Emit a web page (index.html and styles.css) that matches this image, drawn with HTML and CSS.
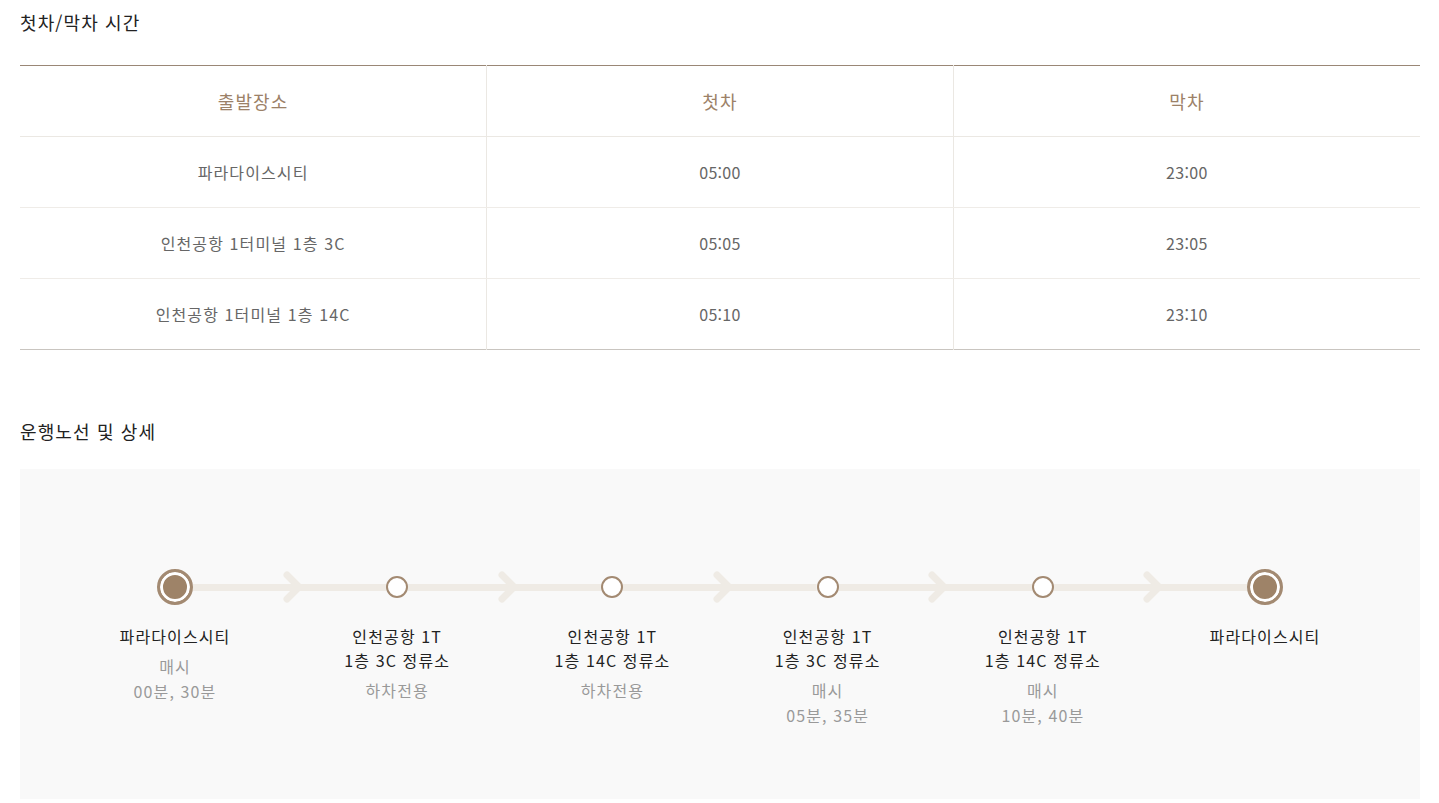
FILE: index.html
```html
<!DOCTYPE html>
<html lang="ko">
<head>
<meta charset="utf-8">
<title>첫차/막차 시간</title>
<link rel="stylesheet" href="styles.css">
</head>
<body>
<div class="wrap">
  <h2 class="title first">첫차/막차 시간</h2>
  <table class="times">
    <thead>
      <tr><th>출발장소</th><th>첫차</th><th>막차</th></tr>
    </thead>
    <tbody>
      <tr><td>파라다이스시티</td><td class="num">05:00</td><td class="num">23:00</td></tr>
      <tr><td>인천공항 1터미널 1층 3C</td><td class="num">05:05</td><td class="num">23:05</td></tr>
      <tr><td>인천공항 1터미널 1층 14C</td><td class="num">05:10</td><td class="num">23:10</td></tr>
    </tbody>
  </table>

  <h2 class="title second">운행노선 및 상세</h2>
  <div class="route-box">
    <div class="route">
      <div class="stop end">
        <div class="node"><span class="dot big"></span></div>
        <div class="label">
          <p class="name">파라다이스시티</p>
          <p class="sub">매시<br>00분, 30분</p>
        </div>
      </div>
      <div class="seg"><svg class="arrow" viewBox="0 0 20 32" width="20" height="32"><path d="M4 4 L16 16 L4 28" fill="none" stroke="#efebe5" stroke-width="7" stroke-linecap="round" stroke-linejoin="round"/></svg></div>
      <div class="stop">
        <div class="node"><span class="dot"></span></div>
        <div class="label">
          <p class="name">인천공항 1T<br>1층 3C 정류소</p>
          <p class="sub">하차전용</p>
        </div>
      </div>
      <div class="seg"><svg class="arrow" viewBox="0 0 20 32" width="20" height="32"><path d="M4 4 L16 16 L4 28" fill="none" stroke="#efebe5" stroke-width="7" stroke-linecap="round" stroke-linejoin="round"/></svg></div>
      <div class="stop">
        <div class="node"><span class="dot"></span></div>
        <div class="label">
          <p class="name">인천공항 1T<br>1층 14C 정류소</p>
          <p class="sub">하차전용</p>
        </div>
      </div>
      <div class="seg"><svg class="arrow" viewBox="0 0 20 32" width="20" height="32"><path d="M4 4 L16 16 L4 28" fill="none" stroke="#efebe5" stroke-width="7" stroke-linecap="round" stroke-linejoin="round"/></svg></div>
      <div class="stop">
        <div class="node"><span class="dot"></span></div>
        <div class="label">
          <p class="name">인천공항 1T<br>1층 3C 정류소</p>
          <p class="sub">매시<br>05분, 35분</p>
        </div>
      </div>
      <div class="seg"><svg class="arrow" viewBox="0 0 20 32" width="20" height="32"><path d="M4 4 L16 16 L4 28" fill="none" stroke="#efebe5" stroke-width="7" stroke-linecap="round" stroke-linejoin="round"/></svg></div>
      <div class="stop">
        <div class="node"><span class="dot"></span></div>
        <div class="label">
          <p class="name">인천공항 1T<br>1층 14C 정류소</p>
          <p class="sub">매시<br>10분, 40분</p>
        </div>
      </div>
      <div class="seg"><svg class="arrow" viewBox="0 0 20 32" width="20" height="32"><path d="M4 4 L16 16 L4 28" fill="none" stroke="#efebe5" stroke-width="7" stroke-linecap="round" stroke-linejoin="round"/></svg></div>
      <div class="stop end">
        <div class="node"><span class="dot big"></span></div>
        <div class="label">
          <p class="name">파라다이스시티</p>
        </div>
      </div>
    </div>
  </div>
</div>
</body>
</html>
```

FILE: styles.css
```css
* { box-sizing: border-box; }
html, body {
  margin: 0;
  padding: 0;
  background: #fff;
  font-family: "Noto Sans CJK KR", "Noto Sans", sans-serif;
  color: #222;
}
.wrap {
  padding: 0 19px 0 20px;
  letter-spacing: 0.07em;
}
.title {
  margin: 0;
  font-size: 18px;
  font-weight: 400;
  line-height: 26px;
  color: #222;
}
.title.first {
  padding-top: 9px;
  margin-bottom: 30px;
}
.title.second {
  margin-top: 68px;
  margin-bottom: 25px;
}
.times {
  width: 100%;
  border-collapse: collapse;
  table-layout: fixed;
  border-top: 1px solid #9a8776;
  border-bottom: 1px solid #c9c5c0;
}
.times th,
.times td {
  height: 71px;
  padding: 0;
  text-align: center;
  vertical-align: middle;
  border-left: 1px solid #ebe8e3;
  border-bottom: 1px solid #efece8;
}
.times th:first-child,
.times td:first-child {
  border-left: none;
}
.times tbody tr:last-child td {
  border-bottom: none;
}
.times th {
  font-size: 18px;
  font-weight: 400;
  color: #9c8168;
  border-bottom-color: #ebe8e3;
}
.times td {
  font-size: 16px;
  color: #666;
}
.times td.num {
  letter-spacing: 0.02em;
}
.route-box {
  background: #f9f9f9;
  padding: 100px 137px 70px;
  min-height: 330px;
}
.route {
  display: flex;
  align-items: flex-start;
}
.stop {
  display: flex;
  flex-direction: column;
  align-items: center;
  flex: none;
  width: 22px;
}
.stop.end {
  width: 36px;
}
.node {
  height: 36px;
  display: flex;
  align-items: center;
  justify-content: center;
}
.dot {
  display: block;
  width: 22px;
  height: 22px;
  border-radius: 50%;
  background: #fff;
  border: 2px solid #a38a72;
}
.dot.big {
  width: 36px;
  height: 36px;
  border: 3px solid #a38a72;
  background: #9e8368;
  box-shadow: inset 0 0 0 3px #fff;
}
.label {
  width: 200px;
  flex: none;
  margin-top: 19px;
  text-align: center;
}
.name {
  margin: 0;
  font-size: 16px;
  line-height: 24px;
  color: #222;
}
.sub {
  margin: 6px 0 0;
  font-size: 16px;
  line-height: 25px;
  color: #999;
}
.seg {
  flex: 1;
  height: 36px;
  display: flex;
  align-items: center;
  justify-content: center;
  background: linear-gradient(#efebe5, #efebe5) center / 100% 7px no-repeat;
}
.arrow {
  display: block;
  margin-left: 6px;
}
```
